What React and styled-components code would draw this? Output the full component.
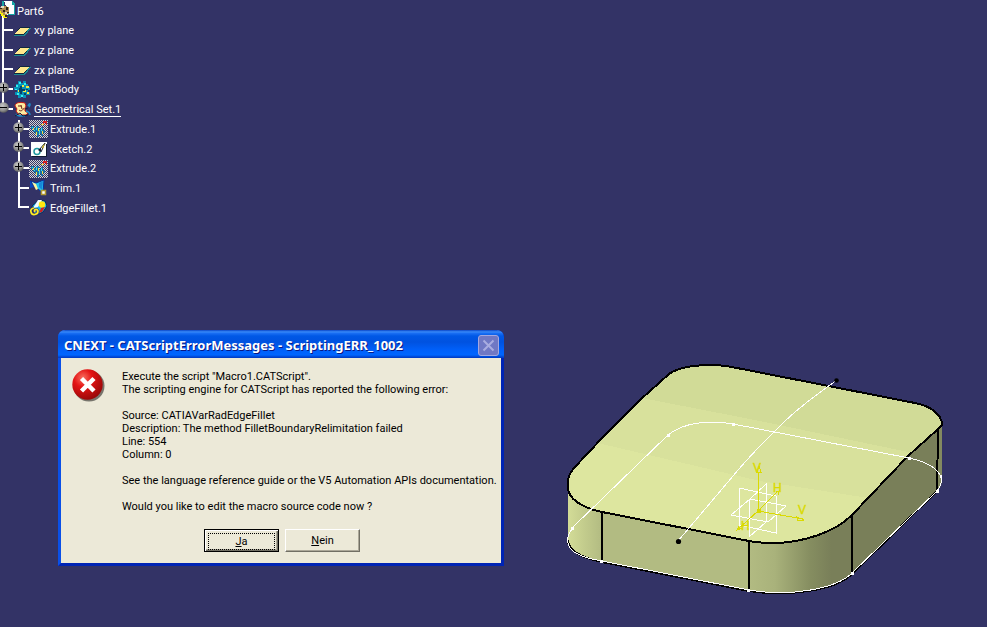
import styled, { createGlobalStyle, css } from "styled-components";

const GlobalStyle = createGlobalStyle`
  * {
    box-sizing: border-box;
  }
  body {
    margin: 0;
    background-color: #333366;
    font-family: Roboto, "Liberation Sans", sans-serif;
    font-size: 11px;
  }
`;

const Workspace = styled.main`
  position: relative;
  min-height: 100vh;
  overflow: hidden;
`;

const Tree = styled.ul`
  display: grid;
  grid-template-rows: repeat(11, 1fr);
  width: max-content;
  height: 218px;
  margin: 0;
  padding: 1px 0 0;
  list-style: none;
  color: white;
`;

const TreeRow = styled.li`
  display: flex;
  align-items: center;
  position: relative;
  padding-left: ${(props) => [0, 2, 18][props.$level]}px;
`;

const Branch = styled.span`
  align-self: stretch;
  display: flex;
  flex-direction: column;
  width: 11px;
  &::before {
    content: "";
    height: 8px;
    border-left: 2px solid white;
    border-bottom: 2px solid white;
  }
  &::after {
    content: "";
    flex: 1;
    border-left: 2px solid ${(props) => (props.$last ? "transparent" : "white")};
  }
`;

const Toggle = styled.button`
  position: absolute;
  left: ${(props) => (props.$level === 2 ? 13 : -2)}px;
  top: 2px;
  width: 11px;
  height: 11px;
  padding: 0;
  border: none;
  background: none;
  svg {
    display: block;
  }
`;

const IconBox = styled.span`
  display: flex;
  width: ${(props) => (props.$level === 0 ? 17 : 21)}px;
  padding-left: ${(props) => (props.$level === 1 ? 1 : 0)}px;
  svg {
    flex: none;
  }
`;

const Label = styled.span`
  line-height: 13px;
  ${(props) =>
    props.$active &&
    css`
      border-bottom: 1px solid white;
    `}
`;

const Model = styled.svg`
  position: absolute;
  left: 560px;
  top: 355px;
  font-family: "Liberation Sans", sans-serif;
`;

const Dialog = styled.section`
  position: absolute;
  left: 58px;
  top: 330px;
  width: 446px;
  border: 3px solid;
  border-top: none;
  border-color: #0a3ed2 #0024b4 #0024b4 #0a50e8;
  border-radius: 7px 7px 0 0;
  background-color: #ece9d8;
`;

const TitleBar = styled.header`
  display: flex;
  align-items: center;
  justify-content: space-between;
  height: 28px;
  margin: 0 -3px;
  padding: 2px 5px 0 6px;
  border-radius: 7px 7px 0 0;
  background: linear-gradient(
    180deg,
    #0a46c8 0,
    #3a8cfa 2px,
    #1c70f4 3px,
    #0058e6 6px,
    #0052e0 12px,
    #0060fa 20px,
    #0066ff 25px,
    #0054e6 26px,
    #0038c0 28px
  );
`;

const Title = styled.h1`
  margin: 0;
  font: bold 13px/18px "Noto Sans", "Open Sans", sans-serif;
  color: white;
  text-shadow: 1px 1px #0a1883;
  white-space: nowrap;
`;

const CloseButton = styled.button`
  display: flex;
  align-items: center;
  justify-content: center;
  width: 21px;
  height: 21px;
  padding: 0;
  border: 1px solid #a4a8e0;
  border-radius: 3px;
  background-color: #7078c4;
`;

const Content = styled.div`
  display: flex;
  gap: 17px;
  padding: 12px 0 0 11px;
`;

const ErrorIcon = styled.svg`
  flex: none;
  margin-top: -1px;
`;

const Message = styled.p`
  margin: 0;
  line-height: 13px;
  white-space: pre-line;
  color: black;
`;

const Buttons = styled.footer`
  display: flex;
  justify-content: center;
  gap: 6px;
  padding: 16px 0 11px 2px;
`;

const Button = styled.button`
  width: 75px;
  height: 23px;
  padding: 2px;
  border: 1px solid;
  border-color: white #716f64 #716f64 white;
  box-shadow: inset -1px -1px #aca899;
  background-color: #ece9d8;
  font: 11px/15px Roboto, "Liberation Sans", sans-serif;
  color: black;
  ${(props) =>
    props.$default &&
    css`
      border-color: black;
      box-shadow: inset 1px 1px white, inset -1px -1px #716f64,
        inset -2px -2px #aca899;
      span {
        display: block;
        margin: 1px;
        border: 1px dotted black;
      }
    `}
`;

const PartIcon = () => (
  <svg width="16" height="20" viewBox="0 0 16 20" shapeRendering="crispEdges">
    <path d="M2 14h2v6H2z" fill="white" />
    <path d="M4 0h8l3 3v11H6V5z" fill="white" />
    <path d="M2 0h2v5H2zM12 0l3 3v11H8v-1h6V4h-2z" fill="#16a4a4" />
    <path d="M1 5h6v1h2v7H7v2H1v-2H0V6h1z" fill="#b08c50" />
    <path d="M0 7h2v1H0zM6 6h2v3H6zM7 11h2v1H7zM4 14h3v2H4zM3 9h2v2H3z" fill="#2c2417" />
    <path d="M1 5h3v2H1zM5 11h2v2H5z" fill="#e6dcc0" />
    <path d="M0 10h1v2h2v2h2v2h2v1H3v-2H1v-2H0z" fill="#f6ee10" />
  </svg>
);

const PlaneIcon = () => (
  <svg width="17" height="16" viewBox="0 0 17 16" shapeRendering="crispEdges">
    <path d="M6 5h11L11 13H0v-1z" fill="#1c8890" />
    <path d="M6 4h10L10 12H0z" fill="#102840" />
    <path d="M6 5h9L9 11H1z" fill="#ffe88c" />
  </svg>
);

const BodyIcon = () => (
  <svg width="17" height="17" viewBox="0 0 17 17" shapeRendering="crispEdges">
    <path d="M4 0h3v2h2V0h3v3h2v3h2v3h-2v2h2v3h-4v3H9v-2H7v2H4v-3H1v-3h2V9H0V6h2V3h2z" fill="#0890b8" />
    <path d="M5 1h2v2H5zM10 2h2v2h-2zM2 4h2v2H2zM1 8h2v1H1zM3 12h2v2H3zM7 14h2v2H7z" fill="#30f0f0" />
    <path d="M12 5h3v2h-3zM13 11h2v2h-2zM9 9h3v2H9zM8 4h2v2H8zM4 9h2v2H4z" fill="#f0e840" />
    <path d="M6 5h2v3h3v2H8v3H6v-2H5V7h1zM12 8h2v1h-2zM10 12h2v2h-2z" fill="#064468" />
  </svg>
);

const SetIcon = () => (
  <svg width="18" height="17" viewBox="0 0 18 17">
    <path d="M1 5C1 1 7 1 11 2l1 3-1 2v3l3 2-2 2H5L2 10l1-2z" fill="#ffeca0" stroke="#c81c14" />
    <path d="M4 5h3M7 4l1 4M5 9c2 2 4 0 5-2" stroke="#6c1c18" fill="none" />
    <path d="M14 5c2-4 3-2 1 1M12 10c3 1 4 2 4 4M2 13c2 3 5 2 9 2" fill="none" stroke="#1c8cc8" strokeWidth="1.500" />
    <path d="M1 15l5-3 3 3 5-1M11 8l3-1" stroke="#10203c" fill="none" />
  </svg>
);

const ExtrudeIcon = () => (
  <svg width="19" height="18" viewBox="0 0 19 18" shapeRendering="crispEdges">
    <defs>
      <pattern id="checker" width="2" height="2" patternUnits="userSpaceOnUse">
        <path d="M0 0h1v1H0zM1 1h1v1H1z" fill="#d4d4d4" />
      </pattern>
    </defs>
    <rect width="19" height="18" fill="url(#checker)" />
    <path d="M2 6h3v2h2V6h3v3h2V7h2v3h2v3h-2v3h-2v-2h-2v3H8v-3H6v-2H4V9H2z" fill="#1c70a4" />
    <path d="M3 7h1v1H3zM7 7h1v3H7zM10 10h1v4h-1zM5 10h1v1H5zM12 8h1v3h-1z" fill="#38e0f0" />
    <path d="M4 8h1v2H4zM9 8h1v3H9zM7 12h1v3H7zM12 4h3v1h-3zM13 11h1v3h-1z" fill="#f0e040" />
    <path d="M14 1h4v4h-1V3h-2v1h-1z" fill="#d82020" />
  </svg>
);

const SketchIcon = () => (
  <svg width="19" height="15" viewBox="-2 0 19 15">
    <path d="M0 0h16v14H0z" fill="white" />
    <path d="M15.500 2v12.500H1" stroke="#101830" fill="none" />
    <circle cx="6" cy="9.500" r="3" fill="none" stroke="#2098a0" strokeWidth="1.500" />
    <path d="M14 1L8 8M14 1L10 10" stroke="#101830" />
    <path d="M7 8l3-2v4z" fill="#101830" />
    <path d="M11 5l3-4-2 6z" fill="#e0c020" />
  </svg>
);

const TrimIcon = () => (
  <svg width="18" height="18" viewBox="0 0 18 18">
    <path d="M1 2l6 2 8-3-1 13-5-4z" fill="#20c8f0" stroke="#0830a0" />
    <path d="M3 3l4 2 2 5-2 1z" fill="#fff8a0" />
    <path d="M10 4l4-2-1 9-3-3z" fill="#1888d8" />
    <path d="M1 2v7l4-1z" fill="#0848c0" />
    <path d="M12.500 11.500h4v4h-4z" fill="white" stroke="#b09830" strokeWidth="1.500" />
  </svg>
);

const FilletIcon = () => (
  <svg width="18" height="18" viewBox="0 0 18 18">
    <path d="M3 7l7-6 6 1 2 5-4 6-6 3-4-3z" fill="#18b8f0" stroke="#082858" />
    <path d="M9 1l4 0-4 7-5 1z" fill="#f4fcff" />
    <circle cx="13" cy="5.500" r="3.200" fill="#ffe810" />
    <path d="M12 9l4-1-3 5-3 1z" fill="#d02020" />
    <path d="M6 13c-2-2 2-4 3-1 0 4-6 5-7 1-1-2 1-4 3-4" fill="none" stroke="#333366" strokeWidth="3" />
    <path d="M6 13c-2-2 2-4 3-1 0 4-6 5-7 1-1-2 1-4 3-4" fill="none" stroke="#fff020" strokeWidth="1.700" />
  </svg>
);

const ToggleIcon = ({ open }) => (
  <svg width="11" height="11" viewBox="0 0 11 11">
    <defs>
      <radialGradient id="ball" cx="0.4" cy="0.35" r="0.7">
        <stop offset="0" stopColor="#c8c8c8" />
        <stop offset="0.6" stopColor="#929292" />
        <stop offset="1" stopColor="#505050" />
      </radialGradient>
    </defs>
    <circle cx="5.500" cy="5.500" r="5.300" fill="url(#ball)" />
    <path d={open ? "M2 5h7v1H2z" : "M2 5h3V2h1v3h3v1H6v3H5V6H2z"} fill="black" />
  </svg>
);

const nodes = [
  { label: "Part6", level: 0, Icon: PartIcon },
  { label: "xy plane", level: 1, Icon: PlaneIcon },
  { label: "yz plane", level: 1, Icon: PlaneIcon },
  { label: "zx plane", level: 1, Icon: PlaneIcon },
  { label: "PartBody", level: 1, Icon: BodyIcon, toggle: "closed" },
  { label: "Geometrical Set.1", level: 1, Icon: SetIcon, toggle: "open", last: true, active: true },
  { label: "Extrude.1", level: 2, Icon: ExtrudeIcon, toggle: "closed" },
  { label: "Sketch.2", level: 2, Icon: SketchIcon, toggle: "closed" },
  { label: "Extrude.2", level: 2, Icon: ExtrudeIcon, toggle: "closed" },
  { label: "Trim.1", level: 2, Icon: TrimIcon },
  { label: "EdgeFillet.1", level: 2, Icon: FilletIcon, last: true },
];

const message = `Execute the script "Macro1.CATScript".
The scripting engine for CATScript has reported the following error:

Source: CATIAVarRadEdgeFillet
Description: The method FilletBoundaryRelimitation failed
Line: 554
Column: 0

See the language reference guide or the V5 Automation APIs documentation.

Would you like to edit the macro source code now ?`;

const points = [
  [572, 528],
  [668, 435],
  [733, 424],
  [909, 458],
  [601, 561],
  [748, 590],
  [852, 573],
  [937, 491],
];

const topFace =
  "M568 480Q569 474 574 468L603 437L640 400L669 374C680 366 697 365 712 365Q722 365 737 368L915 403C930 406 942 414 942 425L937 430L908 456L870 496L852 515C836 531 805 543 772 543Q760 543 749 541L602 512C583 508 568 499 568 488Z";

const PartModel = () => (
  <Model width="390" height="245" viewBox="560 355 390 245" role="img" aria-label="Part6">
    <defs>
      <linearGradient id="leftFillet">
        <stop offset="0" stopColor="#d3dc97" />
        <stop offset="0.5" stopColor="#c2cb8c" />
        <stop offset="1" stopColor="#b2bb82" />
      </linearGradient>
      <linearGradient id="rightFillet">
        <stop offset="0" stopColor="#b2bb82" />
        <stop offset="0.25" stopColor="#a9b27b" />
        <stop offset="0.6" stopColor="#858d60" />
        <stop offset="0.8" stopColor="#797f59" />
      </linearGradient>
      <clipPath id="topClip">
        <path d={topFace} />
      </clipPath>
    </defs>
    <path d="M568 484V542C568 552 583 559 602 562V505z" fill="url(#leftFillet)" />
    <path d="M602 505V562L749 591V535z" fill="#b2bb82" />
    <path d="M749 535V591C790 597 836 590 852 574V505z" fill="url(#rightFillet)" />
    <path d="M852 510V574L937 491V425z" fill="#797f59" />
    <path d="M937 425V491Q942 486 942 480V420z" fill="#838a60" />
    <path d={topFace} fill="#dde69f" />
    <g clipPath="url(#topClip)" shapeRendering="crispEdges">
      <path d="M560 355H950V508L862 497L760 481L602 444L560 434z" fill="#d8e19c" />
      <path d="M560 355H950V461L908 452L760 421L642 398L560 380z" fill="#d1db97" />
    </g>
    <g fill="none" stroke="black" strokeWidth="2" shapeRendering="crispEdges">
      <path d={topFace} />
      <path d="M602 512V561M749 541V590M852 515V573M938 430L937 490" />
    </g>
    <g fill="none" strokeWidth="1" shapeRendering="crispEdges">
      <path
        d="M568 540C568 552 583 558 602 562L749 591C790 597 836 590 852 574L937 491"
        stroke="black"
        strokeWidth="2"
      />
      <path
        d="M572 529C566 537 566 546 574 552Q583 558 602 561L749 590C790 597 836 589 852 573L937 491Q943 484 941 475"
        stroke="white"
      />
      <path d="M572 528L668 435C684 422 710 420 733 424L909 458C928 462 941 470 942 482" stroke="white" />
      <path d="M678 541L733 476Q753 452 781 425Q800 406 837 380" stroke="white" />
    </g>
    <g fill="white" shapeRendering="crispEdges">
      {points.map(([x, y]) => (
        <rect key={x} x={x - 1} y={y - 1} width="3" height="3" />
      ))}
    </g>
    <circle cx="678.500" cy="541.500" r="2.600" />
    <circle cx="836.500" cy="380.500" r="2.300" />
    <g fill="none" stroke="white" shapeRendering="crispEdges">
      <path d="M739 488L776 496V533L739 525z" />
      <path d="M766 484V522L749 537V500z" />
      <path d="M750 499L786 506L768 522L731 515z" />
    </g>
    <g fill="none" stroke="#dada00" shapeRendering="crispEdges">
      <path d="M758 511V472M757 472h4l-2-6zM758 511L778 491M758 511L803 519M797 517l1 4 6-1zM758 511L737 530M739 526l-2 4 5-2M776 492l3-1-1 4" />
      <path d="M757 509h3v3h-3z" fill="#dada00" />
    </g>
    <g fill="#dada00" stroke="#dada00" strokeWidth="0.400" fontSize="12">
      <text x="753" y="472">V</text>
      <text x="773" y="492">H</text>
      <text x="798" y="514">V</text>
      <text x="741" y="530">H</text>
    </g>
  </Model>
);

const SpecTree = () => (
  <Tree>
    {nodes.map(({ label, level, Icon, toggle, last, active }) => (
      <TreeRow key={label} $level={level}>
        {level > 0 && <Branch $last={last} />}
        {toggle && (
          <Toggle $level={level} aria-label={label} aria-expanded={toggle === "open"}>
            <ToggleIcon open={toggle === "open"} />
          </Toggle>
        )}
        <IconBox $level={level}>
          <Icon />
        </IconBox>
        <Label $active={active}>{label}</Label>
      </TreeRow>
    ))}
  </Tree>
);

const ErrorDialog = () => (
  <Dialog role="alertdialog" aria-labelledby="dialogTitle" aria-describedby="dialogText">
    <TitleBar>
      <Title id="dialogTitle">CNEXT - CATScriptErrorMessages - ScriptingERR_1002</Title>
      <CloseButton disabled aria-label="Close">
        <svg width="13" height="13" viewBox="0 0 13 13">
          <path d="M1.500 1.500L11.500 11.500M11.500 1.500L1.500 11.500" stroke="#a9ace0" strokeWidth="2" />
        </svg>
      </CloseButton>
    </TitleBar>
    <Content>
      <ErrorIcon width="33" height="33" viewBox="0 0 33 33">
        <defs>
          <radialGradient id="red" cx="0.35" cy="0.28" r="0.75">
            <stop offset="0" stopColor="#f87060" />
            <stop offset="0.4" stopColor="#e41414" />
            <stop offset="1" stopColor="#980808" />
          </radialGradient>
        </defs>
        <circle cx="17" cy="17" r="15.500" fill="#77756c" />
        <circle cx="15.500" cy="15.500" r="15.200" fill="url(#red)" />
        <path d="M9.500 9.500L22 22M22 9.500L9.500 22" stroke="white" strokeWidth="4.500" />
      </ErrorIcon>
      <Message id="dialogText">{message}</Message>
    </Content>
    <Buttons>
      <Button $default>
        <span>
          <u>J</u>a
        </span>
      </Button>
      <Button>
        <u>N</u>ein
      </Button>
    </Buttons>
  </Dialog>
);

export default function App() {
  return (
    <Workspace>
      <GlobalStyle />
      <SpecTree />
      <PartModel />
      <ErrorDialog />
    </Workspace>
  );
}
